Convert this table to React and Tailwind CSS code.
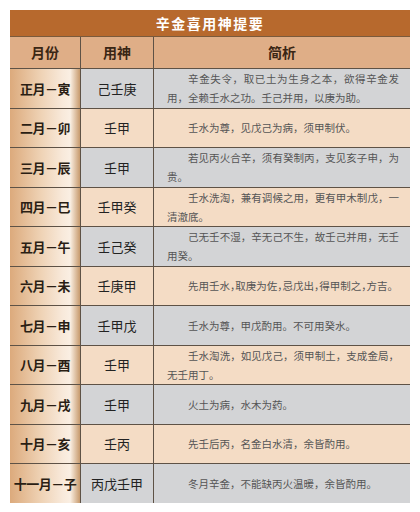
import React from "react";

const rows = [
  { month: "正月－寅", god: "己壬庚", text: "辛金失令，取已土为生身之本，欲得辛金发用，全赖壬水之功。壬己并用，以庚为助。" },
  { month: "二月－卯", god: "壬甲", text: "壬水为尊，见戊己为病，须甲制伏。" },
  { month: "三月－辰", god: "壬甲", text: "若见丙火合辛，须有癸制丙，支见亥子申，为贵。" },
  { month: "四月－巳", god: "壬甲癸", text: "壬水洗淘，兼有调候之用，更有甲木制戊，一清澈底。" },
  { month: "五月－午", god: "壬己癸", text: "己无壬不湿，辛无己不生，故壬己并用，无壬用癸。" },
  { month: "六月－未", god: "壬庚甲", text: "先用壬水，取庚为佐，忌戊出，得甲制之，方吉。", tight: true },
  { month: "七月－申", god: "壬甲戊", text: "壬水为尊，甲戊酌用。不可用癸水。" },
  { month: "八月－酉", god: "壬甲", text: "壬水淘洗，如见戊己，须甲制土，支成金局，无壬用丁。" },
  { month: "九月－戌", god: "壬甲", text: "火土为病，水木为药。" },
  { month: "十月－亥", god: "壬丙", text: "先壬后丙，名金白水清，余皆酌用。" },
  { month: "十一月－子", god: "丙戊壬甲", text: "冬月辛金，不能缺丙火温暖，余皆酌用。" },
];

const cjk = "font-['Noto_Sans_CJK_SC','Noto_Sans',sans-serif]";

const Row = ({ month, god, text, tight, shade }) => (
  <div className={`grid grid-cols-[71px_73px_1fr] h-[39.5px] border-t border-[#5e5246] ${shade ? "bg-[#d3d4d6]" : "bg-[#f4dcc5]"}`}>
    <div className="flex items-center justify-center border-r border-[#5e5246] bg-[linear-gradient(90deg,#dcaa7c_0%,#efd3b6_45%,#f8e9da_75%,#faefe3_86%,#c79a6d_100%)]">
      <span className="text-[13px] font-bold text-[#2a1e14] tracking-[-0.5px]">{month}</span>
    </div>
    <div className="flex items-center justify-center border-r border-[#5e5246]">
      <span className="text-[13px] text-[#222]">{god}</span>
    </div>
    <div className="flex items-center pl-[13px] pr-[11px]">
      <p className={`text-[10.5px] leading-[19px] text-[#555] text-justify indent-[21px] ${tight ? "[font-feature-settings:'halt']" : ""}`}>
        {text}
      </p>
    </div>
  </div>
);

export default function App() {
  return (
    <div className={`w-[420px] h-[512px] bg-white pt-[10px] pl-[10px] ${cjk}`}>
      <div className="w-[400px]">
        <div className="h-[26px] bg-[#b7692d] flex items-center justify-center">
          <span className="text-white text-[14px] font-bold tracking-[1.5px]">辛金喜用神提要</span>
        </div>
        <div className="grid grid-cols-[71px_73px_1fr] h-[32px] bg-[#dfae87] border-t border-[#7a5a3c]">
          <div className="flex items-center justify-center border-r border-[#5e5246]">
            <span className="text-[14px] font-bold text-[#3a2614]">月份</span>
          </div>
          <div className="flex items-center justify-center border-r border-[#5e5246]">
            <span className="text-[14px] font-bold text-[#3a2614]">用神</span>
          </div>
          <div className="flex items-center justify-center">
            <span className="text-[14px] font-bold text-[#3a2614]">简析</span>
          </div>
        </div>
        {rows.map((r, i) => (
          <Row key={r.month} {...r} shade={i % 2 === 0} />
        ))}
      </div>
    </div>
  );
}
